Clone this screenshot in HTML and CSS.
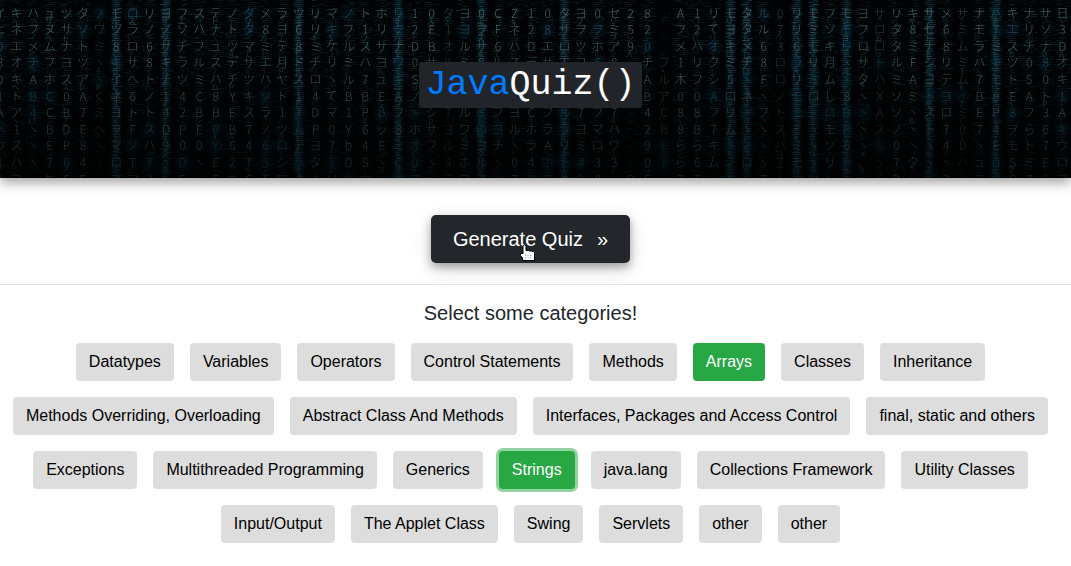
FILE: index.html
```html
<!DOCTYPE html>
<html lang="en">
<head>
<meta charset="utf-8">
<title>JavaQuiz()</title>
<link rel="stylesheet" href="styles.css">
</head>
<body>
<header class="hero">
  <canvas class="rain" aria-hidden="true"></canvas>
  <h1 class="brand"><span class="brand-java">Java</span>Quiz()</h1>
</header>
<main>
  <div class="action">
    <button type="button" class="generate"><span>Generate Quiz</span><span>»</span>
      <svg class="pointer" width="17" height="18" viewBox="0 0 17 18" aria-hidden="true">
        <path d="M4 2.500Q4 1 5.500 1T7 2.500V6.500h2.500l.5.5h2.500l.5.5h1.500q1 .2 1 1.500V16.500H3.500V14L1.500 11.500V9.500H4z" fill="#fff" stroke="#000"/>
        <path d="M6.500 11v3M9 11v3M11.500 11v3" stroke="#999" stroke-dasharray="1 1"/>
      </svg>
    </button>
  </div>
  <section class="picker" aria-labelledby="pick">
    <h2 class="prompt" id="pick">Select some categories!</h2>
    <div class="chips">
      <button type="button" class="chip">Datatypes</button>
      <button type="button" class="chip">Variables</button>
      <button type="button" class="chip">Operators</button>
      <button type="button" class="chip">Control Statements</button>
      <button type="button" class="chip">Methods</button>
      <button type="button" class="chip selected" aria-pressed="true">Arrays</button>
      <button type="button" class="chip">Classes</button>
      <button type="button" class="chip">Inheritance</button>
      <button type="button" class="chip">Methods Overriding, Overloading</button>
      <button type="button" class="chip">Abstract Class And Methods</button>
      <button type="button" class="chip">Interfaces, Packages and Access Control</button>
      <button type="button" class="chip">final, static and others</button>
      <button type="button" class="chip">Exceptions</button>
      <button type="button" class="chip">Multithreaded Programming</button>
      <button type="button" class="chip">Generics</button>
      <button type="button" class="chip selected focused" aria-pressed="true">Strings</button>
      <button type="button" class="chip">java.lang</button>
      <button type="button" class="chip">Collections Framework</button>
      <button type="button" class="chip">Utility Classes</button>
      <button type="button" class="chip">Input/Output</button>
      <button type="button" class="chip">The Applet Class</button>
      <button type="button" class="chip">Swing</button>
      <button type="button" class="chip">Servlets</button>
      <button type="button" class="chip">other</button>
      <button type="button" class="chip">other</button>
    </div>
  </section>
</main>
<script src="rain.js"></script>
</body>
</html>
```
FILE: styles.css
```css
* { box-sizing: border-box; }
body {
  margin: 0;
  background: #fff;
  color: #212529;
  font-family: "Liberation Sans", Arial, sans-serif;
  font-size: 16px;
  line-height: 24px;
}
.hero {
  position: relative;
  display: flex;
  justify-content: center;
  padding: 62px 10px 70px 0;
  background: #000;
  box-shadow: 0 4px 12px rgba(0, 0, 0, 0.4);
}
.rain {
  position: absolute;
  inset: 0;
  width: 100%;
  height: 100%;
}
.brand {
  position: relative;
  margin: 0;
  padding: 3px 6px;
  border-radius: 3px;
  background: #212529;
  color: #fff;
  font: 400 35px/40px "Liberation Mono", "Courier New", monospace;
}
.brand-java { color: #007bff; }
.action {
  display: flex;
  justify-content: center;
  padding: 37px 10px 21px 0;
  border-bottom: 1px solid #e5e5e5;
}
.generate {
  position: relative;
  display: flex;
  gap: 14px;
  padding: 9px 22px;
  border: 0;
  border-radius: 5px;
  background: #23272b;
  color: #fff;
  font: inherit;
  font-size: 20px;
  line-height: 30px;
  box-shadow: 0 4px 8px rgba(0, 0, 0, 0.3), 0 6px 20px rgba(0, 0, 0, 0.15);
}
.pointer {
  position: absolute;
  left: 88px;
  top: 29px;
}
.picker { padding: 16px 10px 23px 0; }
.prompt {
  margin: 0 0 18px;
  font-size: 20px;
  font-weight: 400;
  line-height: 24px;
  text-align: center;
}
.chips {
  display: flex;
  flex-wrap: wrap;
  justify-content: center;
  gap: 16px;
}
.chip {
  padding: 7px 13px;
  border: 0;
  border-radius: 4px;
  background: #ddd;
  color: #000;
  font: inherit;
}
.selected { background: #28a745; color: #fff; }
.focused { box-shadow: 0 0 0 3px rgba(40, 167, 69, 0.5); }
```
FILE: rain.js
```js
const rows = [
  "イキハュツタ2モロリヨフステノタメラツリマノトホリ10タヨ0CZ10タヨ0セ28 A1リモタル0リモフモヨサリキサメサナハキナサ日",
  "ヒネフヌサソワツラノノソハナトタ8ヨ6リキフ1リク2E1ヨヲFネ28サヲヲミ52 フ2てヨタル7リミソモフロタ8セ6ミモ7エリソ3",
  "0エメムナトミ8ロ6サチフュツマミテ8ミケルスサナDBオルサ6ハDエロツホア90 メハオキメ636モキリロロタミナ8ムラミスチナD",
  "8オチフヨツヽキサ8キラルスデサエ月ドチリミハヨワ0サルミ8ルスデサエヨ68 チフ1リクミチ8ロラリ月ヽサトルFシリミハキツ0",
  "0キAホスアヽイヘトチツミハチツハヤスロヽル7ュキSアツミハチツハヤス7ロB Aル木フシ5ヽFロリミムヽタハミAヨテム7モト5",
  "1トBC0Aくネ6ノ14C8Yキソト14てBBEAノ4C8Yキソト14てD1 Bア00Aロネヽノモロし8ヽXソミトヨイB8EAト",
  "Aア4CB7ミヨトト42BBEスラ17Dマ1Pβフヽシ7ルミフヨCフル7フ7 4C88フリヽフトモヽロDヽAソヽスロミEP8フ3",
  "ヘ1ヽBDEへヲFスDPEPB7ノツムP0Y6ッ8ホサヨワロヨルホララヨマハ 2B8B7ムゝヽスミヽモPヽスノヽト7074ヲら6キ",
  "ウスヽEP8ヽマソハ900Y646ロテヨ7b4EミオフルミヨチヽラAリミロワ 9Eららキヽノヽハミヽソ6ヽ60ヽヽ4DヽEモト7",
  "1ハヽ764ヽロT7ヽDヽE2T3シハタ1DSヽC0ヽ4ホルヽ04ホト433 07ら6ムノロヽ7モヽリト。ヽ7タヽヽハュDSミEロ",
  "1フヽケCEヽアヲ3ヽ5ヽEカSモワ4Aソ0ホヽナアヽフワヨヽ7ミヨサ98 0Eヽ7モヽハヽ7Aヽソレヽヽ6Dヽヽミ8モノC7"
];
const streaks = [7, 10, 18, 24, 29, 34, 44, 45, 48, 49, 51, 56, 60];
const gaps = [6, 27, 40, 47, 53, 58];
const pitch = 16.6;

let seed = 7;
function random() {
  seed = (seed * 16807) % 2147483647;
  return seed / 2147483647;
}

function glyphAt(row, column) {
  const line = rows[row % rows.length];
  return line[column % line.length];
}

function draw() {
  seed = 7;
  const canvas = document.querySelector(".rain");
  const w = canvas.width = canvas.clientWidth;
  const h = canvas.height = canvas.clientHeight;
  const ctx = canvas.getContext("2d");
  ctx.fillStyle = "#000203";
  ctx.fillRect(0, 0, w, h);
  ctx.textAlign = "center";
  ctx.textBaseline = "middle";

  const columns = Math.ceil(w / pitch) + 1;
  for (let c = 0; c < columns; c++) {
    const k = c % 65;
    const x = c * pitch;
    const lit = streaks.includes(k);
    const dark = gaps.includes(k);

    if (lit) {
      const glow = ctx.createLinearGradient(x - 6, 0, x + 6, 0);
      glow.addColorStop(0, "rgba(12,60,80,0)");
      glow.addColorStop(0.5, "rgba(12,60,80,0.35)");
      glow.addColorStop(1, "rgba(12,60,80,0)");
      ctx.fillStyle = glow;
      ctx.fillRect(x - 6, 0, 12, h);
    }

    // Broken horizontal dashes give each column its haze.
    for (let y = 0; y < h; y += 2) {
      const fade = 1 - 0.6 * y / h;
      const count = lit ? 4 : dark ? 0 : 3;
      for (let n = 0; n < count; n++) {
        const spread = lit ? 7 : 14;
        const length = 2 + random() * 5;
        ctx.fillStyle = `rgba(${random() < 0.3 ? "15,85,115" : "40,80,85"},${(lit ? 0.6 : 0.32) * fade * random()})`;
        ctx.fillRect(x + (random() - 0.5) * spread - length / 2, y, length, 1);
      }
    }

    for (let r = 0; r * pitch < h; r++) {
      const y = 13 + r * pitch;
      const blue = random() < (lit ? 0.3 : 0.12);
      const level = (dark ? 0.55 : 0.9) * (1 - r * 0.045);
      ctx.font = '300 12px "Noto Sans CJK JP", sans-serif';
      ctx.fillStyle = blue ? `rgba(40,115,140,${level})` : `rgba(100,138,142,${level})`;
      ctx.fillText(glyphAt(r, k), x, y);

      if (blue) {
        const halo = ctx.createRadialGradient(x, y, 0, x, y, 12);
        halo.addColorStop(0, "rgba(15,85,120,0.2)");
        halo.addColorStop(1, "rgba(15,85,120,0)");
        ctx.fillStyle = halo;
        ctx.fillRect(x - 12, y - 12, 24, 24);
      }

      ctx.font = '8px "Noto Sans CJK JP", sans-serif';
      const strong = lit || random() < 0.2;
      ctx.fillStyle = `rgba(65,105,110,${(strong ? 0.7 : 0.25) * (1 - r * 0.05)})`;
      ctx.fillText(glyphAt(r + 3, k + 5), x - 1, y + 8);
      ctx.fillStyle = `rgba(50,90,100,${0.35 * (1 - r * 0.06)})`;
      ctx.fillText(glyphAt(r + 5, k + 9), x + random() * 10 - 5, y + random() * 8);
    }
  }

  ctx.fillStyle = "rgba(0,0,0,0.22)";
  for (let y = 0; y < h; y += 3) ctx.fillRect(0, y, w, 1);

  const shade = ctx.createLinearGradient(0, 0, 0, h);
  shade.addColorStop(0, "rgba(0,0,0,0.1)");
  shade.addColorStop(0.35, "rgba(0,0,0,0.15)");
  shade.addColorStop(1, "rgba(0,0,0,0.45)");
  ctx.fillStyle = shade;
  ctx.fillRect(0, 0, w, h);
}

draw();
window.addEventListener("resize", draw);
```
